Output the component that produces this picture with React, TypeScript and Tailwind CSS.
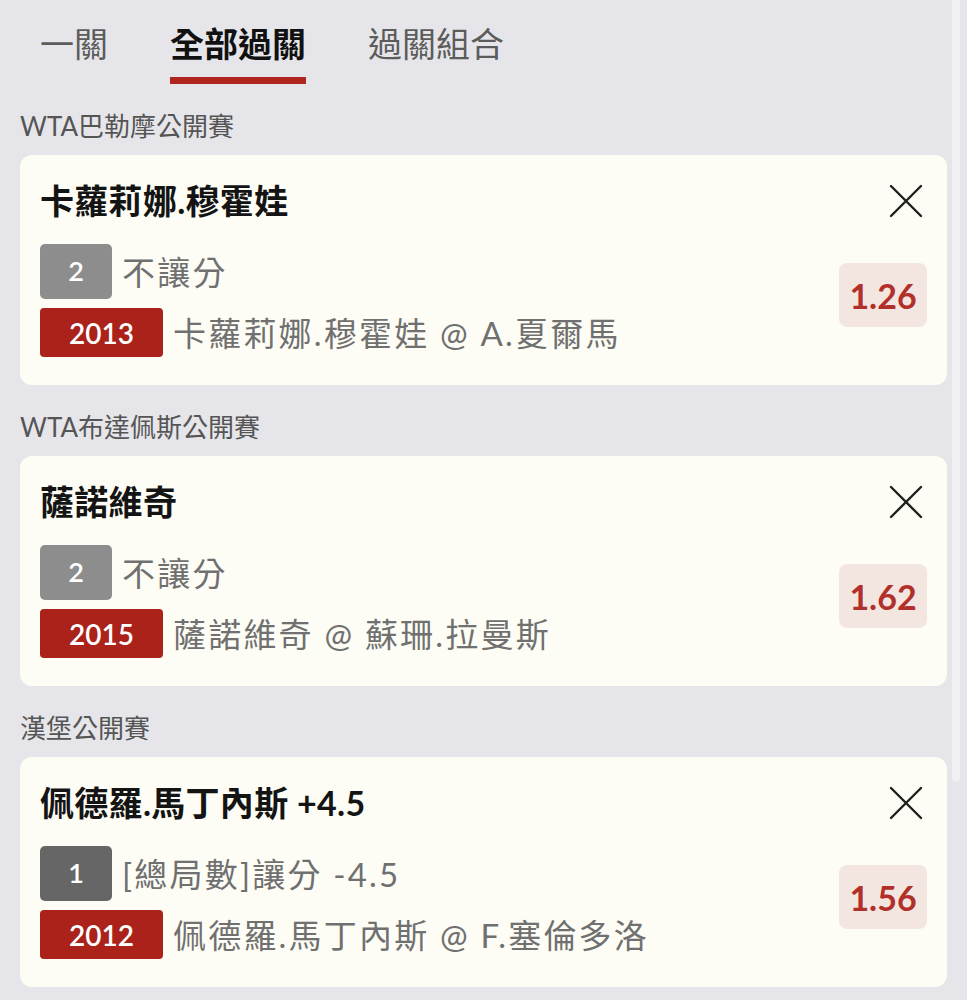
import React from "react";

const FONT = { fontFamily: "Lato, 'Noto Sans CJK TC', 'Noto Sans', sans-serif" };

type Bet = {
  league: string;
  title: string;
  num: string;
  numDark?: boolean;
  market: string;
  code: string;
  match: string;
  odds: string;
};

const bets: Bet[] = [
  {
    league: "WTA巴勒摩公開賽",
    title: "卡蘿莉娜.穆霍娃",
    num: "2",
    market: "不讓分",
    code: "2013",
    match: "卡蘿莉娜.穆霍娃 @ A.夏爾馬",
    odds: "1.26",
  },
  {
    league: "WTA布達佩斯公開賽",
    title: "薩諾維奇",
    num: "2",
    market: "不讓分",
    code: "2015",
    match: "薩諾維奇 @ 蘇珊.拉曼斯",
    odds: "1.62",
  },
  {
    league: "漢堡公開賽",
    title: "佩德羅.馬丁內斯 +4.5",
    num: "1",
    numDark: true,
    market: "[總局數]讓分 -4.5",
    code: "2012",
    match: "佩德羅.馬丁內斯 @ F.塞倫多洛",
    odds: "1.56",
  },
];

function CloseIcon() {
  return (
    <svg width="34" height="34" viewBox="0 0 34 34" fill="none">
      <path d="M2 2 L32 32 M32 2 L2 32" stroke="#1f1f1f" strokeWidth="2.4" strokeLinecap="round" />
    </svg>
  );
}

function Card({ bet }: { bet: Bet }) {
  return (
    <div className="flex rounded-[12px] bg-[#fdfdf5] pl-[20px] pr-[20px] pt-[26px] pb-[28px]">
      <div className="flex flex-1 flex-col">
        <div className="text-[34px] font-bold leading-[40px] text-[#141414] tracking-[0.3px]">{bet.title}</div>
        <div className="mt-[23px] flex h-[55px] items-center">
          <div
            className={
              bet.numDark
                ? "flex h-[55px] w-[72px] items-center justify-center rounded-[5px] bg-[#666666] text-[27px] font-semibold text-white"
                : "flex h-[55px] w-[72px] items-center justify-center rounded-[5px] bg-[#8d8d8d] text-[27px] font-semibold text-white"
            }
          >
            {bet.num}
          </div>
          <div className="ml-[10px] text-[33px] leading-[40px] text-[#707070] tracking-[2.2px]">{bet.market}</div>
        </div>
        <div className="mt-[9px] flex h-[49px] items-center">
          <div className="flex h-[49px] w-[123px] items-center justify-center rounded-[4px] bg-[#aa2219] text-[28px] font-semibold text-white">
            {bet.code}
          </div>
          <div className="ml-[10px] text-[33px] leading-[40px] text-[#707070] tracking-[2.2px]">{bet.match}</div>
        </div>
      </div>
      <div className="flex w-[90px] flex-col items-end">
        <div className="mt-[3px] mr-[4px]">
          <CloseIcon />
        </div>
        <div className="mt-[45px] flex h-[64px] w-[88px] items-center justify-center rounded-[8px] bg-[#f3e6e0] text-[34px] font-bold text-[#b2302a]">
          {bet.odds}
        </div>
      </div>
    </div>
  );
}

export default function App() {
  return (
    <div className="relative min-h-[1000px] w-full overflow-hidden bg-[#e6e6ea]" style={FONT}>
      <div className="absolute right-[7px] top-0 h-[782px] w-[8px] rounded-b-[4px] bg-[#f0f0f3]" />
      <div className="flex gap-[62px] pl-[40px] pt-[22px]">
        <div className="flex flex-col">
          <div className="text-[34px] leading-[44px] text-[#5c5c5c]">一關</div>
        </div>
        <div className="flex flex-col">
          <div className="text-[34px] font-bold leading-[44px] text-[#111111]">全部過關</div>
          <div className="mt-[11px] h-[7px] bg-[#b0261f]" />
        </div>
        <div className="flex flex-col">
          <div className="text-[34px] leading-[44px] text-[#5c5c5c]">過關組合</div>
        </div>
      </div>
      <div className="flex flex-col pl-[20px] pr-[20px]">
        {bets.map((b, i) => (
          <div key={i} className="flex flex-col">
            <div className="mt-[24px] mb-[11px] text-[26px] leading-[36px] text-[#555555]">{b.league}</div>
            <Card bet={b} />
          </div>
        ))}
      </div>
    </div>
  );
}
